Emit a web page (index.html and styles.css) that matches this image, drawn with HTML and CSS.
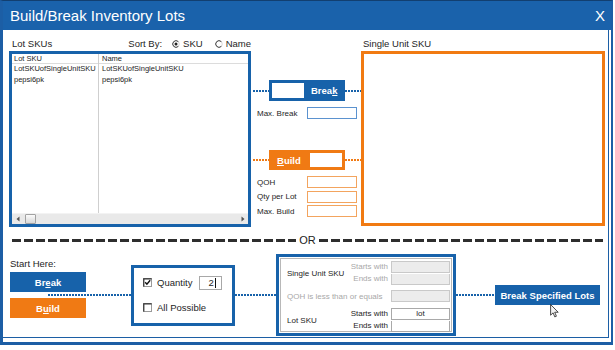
FILE: index.html
```html
<!DOCTYPE html>
<html>
<head>
<meta charset="utf-8">
<title>Build/Break Inventory Lots</title>
<link rel="stylesheet" href="styles.css">
</head>
<body>
<div class="window">
  <div class="titlebar">
    <span>Build/Break Inventory Lots</span>
    <span>X</span>
  </div>
  <div class="content">

    <!-- upper half: lot list, break/build actions, single unit list -->
    <div class="top">
      <div class="lots">
        <div class="head">
          <span class="caption">Lot SKUs</span>
          <span class="sortby">Sort By:</span>
          <span class="radio">
            <svg width="8" height="8" viewBox="0 0 8 8"><circle cx="4" cy="4" r="3.3" fill="#fff" stroke="#d0d0d0" stroke-width="0.8"/><path d="M6.3 1.6 A3.3 3.3 0 1 0 6.3 6.4" fill="none" stroke="#333" stroke-width="0.9"/><circle cx="4" cy="4" r="1.5" fill="#222"/></svg>
            SKU
          </span>
          <span class="radio">
            <svg width="8" height="8" viewBox="0 0 8 8"><circle cx="4" cy="4" r="3.3" fill="#fff" stroke="#d0d0d0" stroke-width="0.8"/><path d="M6.3 1.6 A3.3 3.3 0 1 0 6.3 6.4" fill="none" stroke="#333" stroke-width="0.9"/></svg>
            Name
          </span>
        </div>
        <div class="listbox">
          <div class="cols">
            <div class="col first">
              <div class="cell hd">Lot SKU</div>
              <div class="cell">LotSKUofSingleUnitSKU</div>
              <div class="cell">pepsi6pk</div>
            </div>
            <div class="col">
              <div class="cell hd">Name</div>
              <div class="cell">LotSKUofSingleUnitSKU</div>
              <div class="cell">pepsi6pk</div>
            </div>
          </div>
          <div class="hscroll">
            <svg width="4" height="6" viewBox="0 0 4 6"><path d="M3.5 0.5 L0.5 3 L3.5 5.5 Z" fill="#555"/></svg>
            <div class="thumb"></div>
            <svg class="right" width="4" height="6" viewBox="0 0 4 6"><path d="M0.5 0.5 L3.5 3 L0.5 5.5 Z" fill="#555"/></svg>
          </div>
        </div>
      </div>

      <div class="actions">
        <div class="link-row">
          <div class="dots"></div>
          <div class="act act-break"><span class="slot"></span><span class="act-label">Brea<u>k</u></span></div>
          <div class="dots"></div>
        </div>
        <div class="field field-blue">
          <span>Max. Break</span><span class="box"></span>
        </div>

        <div class="link-row build-row">
          <div class="dots orange"></div>
          <div class="act act-build"><span class="act-label"><u>B</u>uild</span><span class="slot"></span></div>
          <div class="dots orange"></div>
        </div>
        <div class="field field-orange qoh">
          <span>QOH</span><span class="box"></span>
        </div>
        <div class="field field-orange">
          <span>Qty per Lot</span><span class="box"></span>
        </div>
        <div class="field field-orange">
          <span>Max. Build</span><span class="box"></span>
        </div>
      </div>

      <div class="units">
        <div class="head">Single Unit SKU</div>
        <div class="unitbox"></div>
      </div>
    </div>

    <div class="divider">
      <div class="dash"></div>
      <span>OR</span>
      <div class="dash"></div>
    </div>

    <!-- lower half: batch break/build -->
    <div class="bottom">
      <div class="start">
        <div class="start-label">Start Here:</div>
        <div class="btn btn-blue">Br<u>e</u>ak</div>
        <div class="btn btn-orange">B<u>u</u>ild</div>
      </div>
      <div class="dots conn1"></div>

      <div class="qbox">
        <div class="check-row">
          <svg width="9" height="9" viewBox="0 0 9 9"><rect x="0.5" y="0.5" width="8" height="8" fill="#fff" stroke="#9a9a9a"/><path d="M0.8 8.5 V0.8 H8.5" fill="none" stroke="#333" stroke-width="1.2"/><path d="M2.2 4.3 L3.9 6.2 L7.2 2.3" fill="none" stroke="#111" stroke-width="1.4"/></svg>
          <span>Quantity</span>
          <span class="qty">2<i class="caret"></i></span>
        </div>
        <div class="check-row second">
          <svg width="9" height="9" viewBox="0 0 9 9"><rect x="0.5" y="0.5" width="8" height="8" fill="#fff" stroke="#9a9a9a"/><path d="M0.8 8.5 V0.8 H8.5" fill="none" stroke="#333" stroke-width="1.2"/></svg>
          <span>All Possible</span>
        </div>
      </div>
      <div class="dots conn2"></div>

      <div class="fbox">
        <div class="finner">
          <div class="fgroup">
            <span class="flabel">Single Unit SKU</span>
            <div class="fields">
              <div class="frow muted"><span>Starts with</span><span class="finput off"></span></div>
              <div class="frow muted"><span>Ends with</span><span class="finput off joined"></span></div>
            </div>
          </div>
          <div class="fgroup qoh-row">
            <span class="flabel muted">QOH is less than or equals</span>
            <div class="fields">
              <div class="frow"><span class="finput off"></span></div>
            </div>
          </div>
          <div class="fgroup lot-row">
            <span class="flabel">Lot SKU</span>
            <div class="fields">
              <div class="frow"><span>Starts with</span><span class="finput">lot</span></div>
              <div class="frow"><span>Ends with</span><span class="finput joined"></span></div>
            </div>
          </div>
        </div>
      </div>
      <div class="dots conn3"></div>

      <div class="btn btn-blue btn-lots">
        Break Specified Lots
        <svg class="cursor" width="9" height="14" viewBox="0 0 12 19"><path d="M0.7 0.7 L0.7 15.2 L4.1 12 L6.4 17.5 L8.6 16.6 L6.3 11.2 L11 11.2 Z" fill="#f4f4f4" stroke="#222" stroke-width="1.1"/></svg>
      </div>
    </div>

  </div>
</div>
</body>
</html>
```

FILE: styles.css
```css
* { box-sizing: border-box; }

body {
  margin: 0;
  background: #fff;
  font-family: "Liberation Sans", Arial, sans-serif;
  color: #1e1e1e;
}

/* window frame */
.window {
  width: 613px;
  background: #fff;
  border-left: 3px solid #1c5ea5;
  border-top: 1px solid #123f70;
  border-right: 2px solid #1c5ea5;
  border-bottom: 3px solid #1c5ea5;
}

.titlebar {
  height: 29px;
  padding: 0 6px 0 7px;
  display: flex;
  align-items: center;
  justify-content: space-between;
  background: #1a62ab;
  color: #fff;
  font-size: 15px;
}

.content {
  height: 308px;
  margin: 0 2px 4px 0;
  border-right: 1px solid #1c5ea5;
  border-bottom: 1px solid #1c5ea5;
}

/* upper half */
.top {
  display: flex;
  height: 197px;
  padding-left: 6px;
}

.head {
  height: 21px;
  padding: 6px 0 0 3px;
  display: flex;
  align-items: center;
  font-size: 9.5px;
  line-height: 14px;
  white-space: nowrap;
}

.lots { width: 242px; }
.lots .caption { width: 119px; }
.sortby { margin-right: 10px; }

.radio { display: flex; align-items: center; gap: 3px; }
.radio + .radio { margin-left: 12px; }
.radio svg { display: block; }

.listbox {
  height: 176px;
  border: 3px solid #1762aa;
  display: flex;
  flex-direction: column;
}

.cols { flex: 1; display: flex; font-size: 7.5px; }
.col { flex: 1; }
.col.first { flex: none; width: 87px; border-right: 1px solid #cfcfcf; }

.cell {
  height: 10.5px;
  line-height: 10.5px;
  padding-left: 3px;
  white-space: nowrap;
}
.col.first .cell { padding-left: 2px; }
.cell.hd {
  height: 10px;
  line-height: 9px;
  border-bottom: 1px solid #dcdcdc;
}

.hscroll {
  flex: none;
  height: 11px;
  padding: 0 3px 0 4px;
  display: flex;
  align-items: center;
  background: #e9e9e9;
  border-top: 1px solid #f3f3f3;
}
.hscroll svg { display: block; }
.hscroll .right { margin-left: auto; }
.thumb {
  width: 11px;
  height: 10px;
  margin-left: 5px;
  border: 1px solid #a2a2a2;
  border-radius: 1px;
  background: linear-gradient(#fbfbfb, #d8d8d8);
}

/* break / build actions */
.actions {
  width: 110px;
  padding: 50px 0 0 2px;
  display: flex;
  flex-direction: column;
}

.link-row { display: flex; align-items: center; height: 21px; }
.build-row { margin-top: 31px; height: 20px; }

.dots {
  flex: 1;
  height: 2px;
  background: repeating-linear-gradient(90deg, #1762aa 0 2px, transparent 2px 3px);
}
.dots.orange {
  background: repeating-linear-gradient(90deg, #f07a14 0 2px, transparent 2px 3px);
}

.act {
  width: 76px;
  height: 100%;
  display: flex;
  align-items: center;
  color: #fff;
  font-size: 9.5px;
  font-weight: bold;
}
.act .slot { background: #fff; height: 15px; width: 32px; }
.act-break { background: #1762aa; padding-left: 3px; }
.act-break .act-label { margin-left: 7px; }
.act-build { background: #f07a14; padding: 0 3px 0 8px; }
.act-build .slot { margin-left: auto; height: 14px; }

.field {
  height: 12px;
  padding: 0 4px;
  display: flex;
  align-items: center;
  justify-content: space-between;
  font-size: 8px;
  margin-top: 2.5px;
}
.field .box { width: 50px; height: 12px; background: #fff; }
.field-blue { margin-top: 6px; }
.field-blue .box { border: 1px solid #5b92cf; }
.field-orange .box { border: 1px solid #f3a45e; }
.field.qoh { margin-top: 6px; }

.units { width: 244px; }
.units .head { padding-left: 2px; }
.unitbox { height: 175px; border: 3px solid #f17a12; }

/* OR separator */
.divider {
  height: 10px;
  margin: 8px 0;
  padding: 0 5px 0 9px;
  display: flex;
  align-items: center;
}
.dash {
  flex: 1;
  height: 3px;
  background: repeating-linear-gradient(90deg, #2e2e2e 0 9px, transparent 9px 12px);
}
.divider span { margin: 0 3px; font-size: 11px; line-height: 10px; color: #222; }

/* lower half */
.bottom {
  height: 84px;
  padding-left: 7px;
  display: flex;
  align-items: center;
}

.start { width: 76px; padding-bottom: 14px; }
.start-label { font-size: 9.5px; line-height: 12px; margin-bottom: 2px; }

.btn {
  height: 20px;
  display: flex;
  align-items: center;
  justify-content: center;
  color: #fff;
  font-size: 9.5px;
  font-weight: bold;
}
.btn + .btn { margin-top: 6px; }
.btn-blue { background: #1762aa; }
.btn-orange { background: #f07a14; }

.bottom .dots { flex: none; }
.conn1 { width: 83px; margin-left: -38px; }
.conn2 { width: 41px; }
.conn3 { width: 39px; }

.qbox {
  width: 104px;
  height: 61px;
  border: 3px solid #1762aa;
  padding: 8px 0 0 9px;
  font-size: 9.5px;
}
.check-row { height: 14px; display: flex; align-items: center; }
.check-row svg { display: block; margin-right: 5px; }
.check-row.second { margin-top: 10.5px; }
.qty {
  width: 23px;
  height: 14px;
  margin-left: 7px;
  padding-left: 8px;
  border: 1px solid #a8a8a8;
  display: flex;
  align-items: center;
}
.caret { width: 1px; height: 10px; margin-left: 1px; background: #111; }

.fbox {
  width: 180px;
  height: 82px;
  border: 3px solid #1762aa;
  padding: 1px;
}
.finner {
  height: 100%;
  border: 1px solid #b8b8b8;
  padding: 2px 1px 1px 6px;
  font-size: 8px;
}
.fgroup { display: flex; align-items: center; }
.fgroup .flabel { flex: 1; white-space: nowrap; }
.qoh-row { margin-top: 5px; }
.lot-row { margin-top: 6px; }
.fields { display: flex; flex-direction: column; }
.frow {
  display: flex;
  align-items: center;
  justify-content: flex-end;
  gap: 3px;
  line-height: 12px;
}
.muted { color: #a8a8a8; }
.finput {
  width: 59px;
  height: 12px;
  border: 1px solid #a9a9a9;
  background: #fff;
  color: #1e1e1e;
  text-align: center;
  line-height: 10px;
}
.finput.off { background: #ececec; border-color: #c9c9c9; }
.finput.joined { height: 11px; border-top: none; }

.btn-lots { width: 105px; position: relative; }
.cursor { position: absolute; left: 55px; top: 19px; }
```
